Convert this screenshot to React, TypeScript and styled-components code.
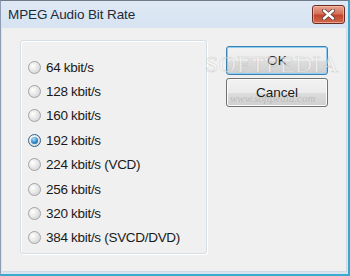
import React from 'react';
import styled, { createGlobalStyle } from 'styled-components';

const GlobalStyle = createGlobalStyle`
  html, body {
    margin: 0;
    padding: 0;
    background: #ffffff;
  }
`;

const rates = [
  '64 kbit/s',
  '128 kbit/s',
  '160 kbit/s',
  '192 kbit/s',
  '224 kbit/s (VCD)',
  '256 kbit/s',
  '320 kbit/s',
  '384 kbit/s (SVCD/DVD)',
];

const App: React.FC = () => {
  const selected = '192 kbit/s';

  return (
    <>
      <GlobalStyle />
      <Window>
        <TitleBar>
          <Title>MPEG Audio Bit Rate</Title>
          <CloseButton>
            <svg width="15" height="11" viewBox="0 0 15 11">
              <path d="M3 1.5 L12 9.5 M12 1.5 L3 9.5" stroke="#5a3a36" strokeWidth="4" strokeLinecap="round" />
              <path d="M3 1.5 L12 9.5 M12 1.5 L3 9.5" stroke="#ffffff" strokeWidth="2.4" strokeLinecap="round" />
            </svg>
          </CloseButton>
        </TitleBar>
        <Client>
          <GroupBox>
            {rates.map((rate) => (
              <RadioRow key={rate}>
                <Radio $checked={rate === selected} />
                <RadioLabel>{rate}</RadioLabel>
              </RadioRow>
            ))}
          </GroupBox>
          <ButtonColumn>
            <Button $default>OK</Button>
            <Button>Cancel</Button>
          </ButtonColumn>
          <Watermark>SOFTPEDIA</Watermark>
          <WatermarkUrl>www.softpedia.com</WatermarkUrl>
        </Client>
      </Window>
    </>
  );
};

const Window = styled.div`
  width: 350px;
  height: 276px;
  box-sizing: border-box;
  display: flex;
  flex-direction: column;
  background: #d9e4f1;
  border-top: 1px solid #6f7b8a;
  border-left: 1px solid #8d9cb0;
  border-right: 2px solid #38aacd;
  border-bottom: 2px solid #38aacd;
  font-family: 'Liberation Sans', Arial, sans-serif;
`;

const TitleBar = styled.div`
  height: 27px;
  flex-shrink: 0;
  display: flex;
  align-items: flex-start;
  justify-content: space-between;
  padding: 0 3px 0 7px;
  background: linear-gradient(#dfe9f5, #d7e3f1);
`;

const Title = styled.div`
  margin-top: 6px;
  font-size: 13.5px;
  color: #1e2a38;
  letter-spacing: -0.1px;
`;

const CloseButton = styled.div`
  margin-top: 4px;
  width: 33px;
  height: 19px;
  box-sizing: border-box;
  border: 1px solid #6b2c24;
  border-radius: 3px;
  display: flex;
  align-items: center;
  justify-content: center;
  background: linear-gradient(#e8a591 0%, #d5715b 45%, #c2442c 55%, #cf6a4e 100%);
  box-shadow: inset 0 0 0 1px rgba(255, 200, 185, 0.6);
`;

const Client = styled.div`
  position: relative;
  flex: 1;
  display: flex;
  align-items: flex-start;
  margin: 0 1px 2px 1px;
  padding: 12px 0 0 18px;
  background: #f0f0f0;
  border-right: 1px solid #d3d8e6;
  border-bottom: 1px solid #d3d8e6;
`;

const GroupBox = styled.div`
  width: 187px;
  height: 214px;
  box-sizing: border-box;
  padding: 14px 0 0 7px;
  border: 1px solid #d5dfe5;
  border-radius: 3px;
  box-shadow: inset 1px 1px 0 #ffffff, 1px 1px 0 #ffffff;
`;

const RadioRow = styled.div`
  height: 24.4px;
  display: flex;
  align-items: center;
  gap: 5px;
`;

const Radio = styled.div<{ $checked?: boolean }>`
  width: 13px;
  height: 13px;
  box-sizing: border-box;
  border-radius: 50%;
  border: 1px solid ${(p) => (p.$checked ? '#2c628b' : '#a2a2a2')};
  background: radial-gradient(circle at 35% 35%, #ffffff, #dcdcdc 70%, #c8c8c8);
  display: flex;
  align-items: center;
  justify-content: center;

  &::after {
    content: '';
    display: ${(p) => (p.$checked ? 'block' : 'none')};
    width: 7px;
    height: 7px;
    border-radius: 50%;
    background: radial-gradient(circle at 40% 30%, #aee0fb, #3289c7 55%, #1b4f86);
  }
`;

const RadioLabel = styled.span`
  font-size: 13.5px;
  color: #1a1a1a;
  letter-spacing: -0.3px;
`;

const ButtonColumn = styled.div`
  margin: 6px 0 0 19px;
  display: flex;
  flex-direction: column;
  gap: 3px;
`;

const Button = styled.div<{ $default?: boolean }>`
  width: 102px;
  height: 29px;
  box-sizing: border-box;
  display: flex;
  align-items: center;
  justify-content: center;
  border: 1px solid ${(p) => (p.$default ? '#3c7fb1' : '#707070')};
  border-radius: 3px;
  background: linear-gradient(#f2f2f2 0%, #ebebeb 50%, #dddddd 51%, #cfcfcf 100%);
  box-shadow: inset 0 0 0 1px ${(p) => (p.$default ? '#8ed0f3' : '#fcfcfc')};
  font-size: 13.5px;
  color: #1a1a1a;
`;

const Watermark = styled.div`
  position: absolute;
  left: 203px;
  top: 23px;
  font-family: 'Liberation Serif', serif;
  font-size: 24px;
  letter-spacing: 0.5px;
  color: rgba(255, 255, 255, 0.55);
  -webkit-text-stroke: 0.6px rgba(170, 170, 170, 0.45);
  pointer-events: none;
`;

const WatermarkUrl = styled.div`
  position: absolute;
  left: 228px;
  top: 64px;
  font-family: 'Liberation Serif', serif;
  font-style: italic;
  font-size: 11px;
  color: rgba(150, 150, 150, 0.45);
  pointer-events: none;
`;

export default App;
